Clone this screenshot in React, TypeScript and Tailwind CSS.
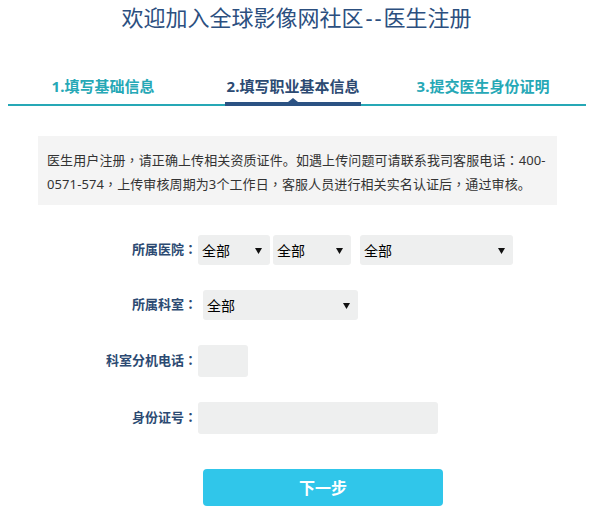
import React from "react";

const Arrow = () => (
  <svg width="7" height="7" viewBox="0 0 7 7" className="shrink-0">
    <polygon points="0,1 7,1 3.5,7" fill="#111" />
  </svg>
);

const FakeSelect = ({ w, className = "" }: { w: string; className?: string }) => (
  <div
    className={`${w} ${className} h-[30px] rounded-[3px] bg-[#eeefef] flex items-center justify-between pl-[4px] pr-[8px] text-[14px] text-black`}
  >
    <span>全部</span>
    <Arrow />
  </div>
);

// full-width punctuation centred in its box, as in the reference
const P = ({ c }: { c: string }) => (
  <span className="font-['Noto_Sans_CJK_TC',sans-serif] leading-none">{c}</span>
);

const Label = ({ text }: { text: string }) => (
  <label className="w-[197px] text-right text-[13px] font-bold text-[#2c4a72]">
    {text}
    <P c="：" />
  </label>
);

export default function App() {
  const tabs = ["1.填写基础信息", "2.填写职业基本信息", "3.提交医生身份证明"];

  return (
    <div className="w-[593px] h-[514px] bg-white font-['Noto_Sans','Noto_Sans_CJK_SC',sans-serif] overflow-hidden">
      <h1 className="pt-[1px] text-center text-[22px] leading-[33px] text-[#2c4f7f] font-normal">
        欢迎加入全球影像网社区<span className="tracking-[2px] ml-[2px]">--</span>医生注册
      </h1>

      <div className="mt-[42px] mx-[8px] w-[578px] border-b-2 border-[#26a8b6]">
        <div className="grid grid-cols-[190px_190px_190px]">
          {tabs.map((t, i) => (
            <div key={t} className="flex justify-center pb-[8px]">
              <span
                className={`relative px-[2px] text-[15px] leading-[20px] font-bold ${
                  i === 1 ? "text-[#2c4a72]" : "text-[#26a8b6]"
                }`}
              >
                {t}
                {i === 1 && (
                  <span className="absolute left-0 right-0 bottom-[-10px] h-[4px] bg-[#2b5283]">
                    <span className="absolute left-1/2 -translate-x-1/2 top-[-4px] w-0 h-0 border-x-[5px] border-x-transparent border-b-[4px] border-b-[#2b5283]" />
                  </span>
                )}
              </span>
            </div>
          ))}
        </div>
      </div>

      <div className="mt-[30px] ml-[38px] w-[519px] bg-[#f4f4f4] pl-[9px] pt-[12px] pb-[9px] text-[13px] leading-[24px] tracking-[0.1px] text-[#333]">
        <div className="whitespace-nowrap">
          医生用户注册<P c="，" />请正确上传相关资质证件。如遇上传问题可请联系我司客服电话<P c="：" />400-
        </div>
        <div className="whitespace-nowrap">
          0571-574<P c="，" />上传审核周期为3个工作日<P c="，" />客服人员进行相关实名认证后<P c="，" />通过审核。
        </div>
      </div>

      <div className="mt-[30px] flex flex-col">
        <div className="flex items-center h-[30px]">
          <Label text="所属医院" />
          <FakeSelect w="w-[72px]" className="ml-[1px]" />
          <FakeSelect w="w-[78px]" className="ml-[3px]" />
          <FakeSelect w="w-[153px]" className="ml-[9px]" />
        </div>

        <div className="flex items-center h-[30px] mt-[25px]">
          <Label text="所属科室" />
          <FakeSelect w="w-[155px]" className="ml-[6px]" />
        </div>

        <div className="flex items-center h-[32px] mt-[25px]">
          <Label text="科室分机电话" />
          <input className="ml-[1px] w-[50px] h-[32px] rounded-[3px] bg-[#eeefef] outline-none" />
        </div>

        <div className="flex items-center h-[32px] mt-[25px]">
          <Label text="身份证号" />
          <input className="ml-[1px] w-[240px] h-[32px] rounded-[3px] bg-[#eeefef] outline-none" />
        </div>

        <button className="mt-[35px] ml-[203px] w-[240px] h-[37px] rounded-[4px] bg-[#30c6ea] text-white text-[16px] font-bold">
          下一步
        </button>
      </div>
    </div>
  );
}
